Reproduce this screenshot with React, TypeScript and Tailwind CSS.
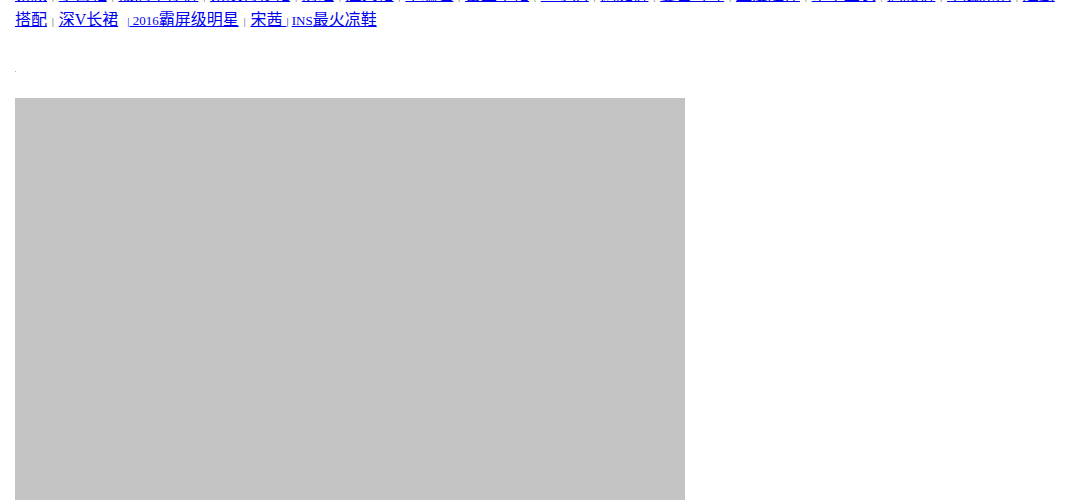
const topLinks = [
  '新款',
  '小白鞋',
  '破洞牛仔裤',
  '条纹衬衫裙',
  '防晒',
  '渔夫帽',
  '草编包',
  '蕾丝半裙',
  '一字肩',
  '阔腿裤',
  '复古耳环',
  '显瘦连体',
  '吊带上衣',
  '高腰裤',
  '平底凉拖',
  '通勤',
]

const Sep = () => <span className="mx-[2px] text-[11px] text-[#555]"> | </span>

const A = ({ children }: { children: React.ReactNode }) => (
  <a href="#" className="text-[#0000ee] underline">
    {children}
  </a>
)

export default function App() {
  return (
    <div
      className="h-[500px] overflow-hidden bg-white px-[15px]"
      style={{ fontFamily: '"Liberation Serif", "Noto Sans CJK SC", serif' }}
    >
      <div className="-mt-[17px] text-[16px] leading-[24px]">
        <div className="whitespace-nowrap">
          {topLinks.map((t, i) => (
            <span key={i}>
              <A>{t}</A>
              {i < topLinks.length - 1 && <Sep />}
            </span>
          ))}
        </div>
        <div className="whitespace-nowrap">
          <A>搭配</A>
          <Sep />
          <A>深V长裙</A>
          <span className="text-[12px]">&nbsp;&nbsp; </span>
          <A>
            <span className="text-[11px]">|</span>
            <span className="text-[13px]"> 2016</span>霸屏级明星
          </A>
          <Sep />
          <A>
            宋茜 <span className="text-[11px]">|</span>
          </A>
          <span className="text-[12px]"> </span>
          <A>
            <span className="text-[13px]">INS</span>最火凉鞋
          </A>
        </div>
      </div>
      <div className="mt-[38px] h-px w-px bg-[#b0b0b0]" />
      <div className="mt-[26px] h-[420px] w-[670px] bg-[#c3c3c3]" />
    </div>
  )
}
